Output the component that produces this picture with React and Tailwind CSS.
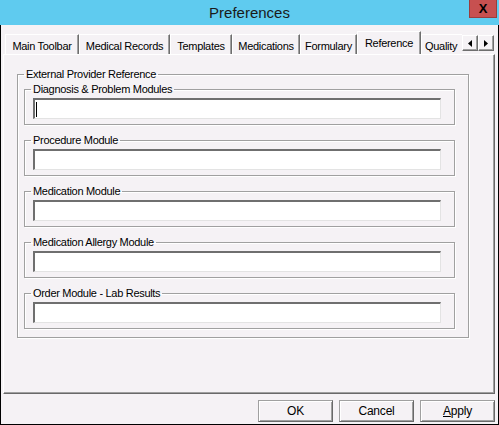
const TABS = [
  { label: 'Main Toolbar', w: 'w-[74px]' },
  { label: 'Medical Records', w: 'w-[91px]' },
  { label: 'Templates', w: 'w-[62px]' },
  { label: 'Medications', w: 'w-[68px]' },
  { label: 'Formulary', w: 'w-[57px]' },
  { label: 'Reference', w: 'w-[64px]', active: true },
  { label: 'Quality', w: 'w-[52px]', clipped: true },
]

const GROUPS = [
  { label: 'Diagnosis & Problem Modules', caret: true },
  { label: 'Procedure Module' },
  { label: 'Medication Module' },
  { label: 'Medication Allergy Module' },
  { label: 'Order Module - Lab Results' },
]

function Tab({ label, w, active, clipped }) {
  if (active) {
    return (
      <div
        className={`${w} shrink-0 h-[24px] -mb-px relative z-10 bg-[#f5f2f5] border-t border-l border-white border-r border-r-[#6e6e6e] shadow-[inset_-1px_0_0_#a0a0a0] flex justify-center pt-[4px]`}
      >
        {label}
      </div>
    )
  }
  return (
    <div
      className={`${w} shrink-0 h-[20px] border-t border-l border-white border-r border-r-[#6e6e6e] shadow-[inset_-1px_0_0_#a0a0a0] flex pt-[4px] ${clipped ? 'justify-start pl-[3px]' : 'justify-center'}`}
    >
      {label}
    </div>
  )
}

function Arrow({ dir }) {
  return (
    <div className="w-[16px] h-[16px] bg-[#f5f2f5] border-t border-l border-white border-r border-b border-r-[#6e6e6e] border-b-[#6e6e6e] shadow-[inset_-1px_-1px_0_#a0a0a0] flex items-center justify-center">
      <svg width="4" height="7" viewBox="0 0 4 7">
        {dir === 'left' ? <path d="M4 0 L0 3.5 L4 7 Z" fill="#000" /> : <path d="M0 0 L4 3.5 L0 7 Z" fill="#000" />}
      </svg>
    </div>
  )
}

function Button({ children }) {
  return (
    <div className="w-[75px] h-[22px] bg-[#f5f2f5] border-t border-l border-[#a0a0a0] border-r border-b border-r-[#696969] border-b-[#696969] shadow-[inset_1px_1px_0_#fff,inset_-1px_-1px_0_#a0a0a0] flex items-center justify-center text-[12px] tracking-[-0.2px]">
      {children}
    </div>
  )
}

export default function App() {
  return (
    <div className="w-[499px] h-[425px] flex flex-col text-black text-[11px] tracking-[-0.3px] leading-[14px] font-['Liberation_Sans',Arial,sans-serif] select-none">
      {/* title bar */}
      <div className="h-[25px] shrink-0 bg-[#5fcbef] relative flex items-center justify-center">
        <span className="text-[15px] tracking-normal text-[#1a1a1a]">Preferences</span>
        <div className="absolute right-[2px] top-0 w-[28px] h-[18px] bg-[#c75050] border border-t-0 border-[#9b3d3d] flex items-center justify-center">
          <span className="text-[13px] font-bold leading-none tracking-normal">X</span>
        </div>
      </div>

      <div className="flex-1 flex flex-col bg-[#f5f2f5] border-l border-r border-b border-black pt-[6px]">
        {/* tabs */}
        <div className="h-[23px] flex items-end pl-[4px]">
          <div className="w-[457px] flex items-end overflow-hidden">
            {TABS.map((t) => (
              <Tab key={t.label} {...t} />
            ))}
          </div>
          <div className="flex self-start mt-[4px]">
            <Arrow dir="left" />
            <Arrow dir="right" />
          </div>
        </div>

        {/* tab panel */}
        <div className="h-[340px] ml-[2px] mr-[3px] border-t border-l border-white border-r border-b border-r-[#696969] border-b-[#696969] shadow-[inset_-1px_-1px_0_#a0a0a0]">
          <fieldset className="ml-[13px] mt-[12px] w-[452px] border border-[#a0a0a0] shadow-[inset_1px_1px_0_#fff,1px_1px_0_#fff] pl-[6px] pr-[13px] pt-[1px] pb-[8px]">
            <legend className="px-[2px] leading-[14px]">External Provider Reference</legend>
            <div className="flex flex-col gap-[8px]">
              {GROUPS.map((g) => (
                <fieldset
                  key={g.label}
                  className="border border-[#a0a0a0] shadow-[inset_1px_1px_0_#fff,1px_1px_0_#fff] pl-[8px] pr-[13px] pt-[2px] pb-[5px]"
                >
                  <legend className="-ml-[2px] px-[2px] leading-[14px]">{g.label}</legend>
                  <div className="h-[21px] bg-white border-t-2 border-l-2 border-t-[#6f6f6f] border-l-[#6f6f6f] border-b border-r border-b-[#e3e3e3] border-r-[#e3e3e3] flex items-center">
                    {g.caret && <span className="ml-[1px] w-px h-[15px] bg-black" />}
                  </div>
                </fieldset>
              ))}
            </div>
          </fieldset>
        </div>

        {/* buttons */}
        <div className="flex justify-end gap-[6px] pr-[3px] pt-[6px]">
          <Button>OK</Button>
          <Button>Cancel</Button>
          <Button>
            <span>
              <span className="underline">A</span>pply
            </span>
          </Button>
        </div>
      </div>
    </div>
  )
}
